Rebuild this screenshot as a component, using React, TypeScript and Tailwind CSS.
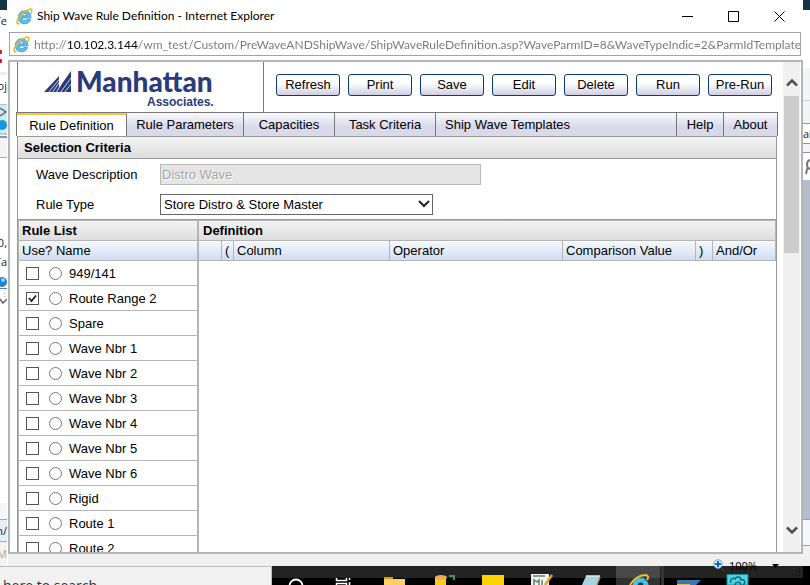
import React from "react";

const rules = [
  "949/141",
  "Route Range 2",
  "Spare",
  "Wave Nbr 1",
  "Wave Nbr 2",
  "Wave Nbr 3",
  "Wave Nbr 4",
  "Wave Nbr 5",
  "Wave Nbr 6",
  "Rigid",
  "Route 1",
  "Route 2",
];

const actions = ["Refresh", "Print", "Save", "Edit", "Delete", "Run", "Pre-Run"];

const tabs = [
  { name: "Rule Parameters", size: "w-[117px]" },
  { name: "Capacities", size: "w-[91px]" },
  { name: "Task Criteria", size: "w-[101px]" },
  { name: "Ship Wave Templates", size: "flex-1 text-left pl-[9px]" },
  { name: "Help", size: "w-[47px]" },
  { name: "About", size: "w-[53px]" },
];

function IeLogo({ className }: { className: string }) {
  return (
    <svg viewBox="0 0 18 18" className={className} aria-hidden="true">
      <path
        d="M15.800 10.700H6.200c.1 1.700 1.300 2.700 3 2.700 1.100 0 1.900-.4 2.300-1.100h3.900c-.8 2.800-3.100 4.400-6.100 4.400-4.100 0-6.900-2.700-6.900-6.700S5.200 2.900 9.200 2.900c4.200 0 6.800 2.900 6.600 7.800zM6.300 8.200h5.400c-.2-1.400-1.200-2.200-2.700-2.200S6.500 6.800 6.300 8.200z"
        fill="#5cc0ef"
        stroke="#1f82cb"
        strokeWidth=".7"
      />
      <path
        d="M3.200 16.600c-2.600.8-2.700-2.100-.8-5.300C5 6.600 10.500 2 14.300 1.300c2.500-.5 2.900 1.500 1.900 3.900"
        fill="none"
        stroke="#efb52a"
        strokeWidth="1.700"
        strokeLinecap="round"
      />
    </svg>
  );
}

function Chevron({ className, d }: { className: string; d: string }) {
  return (
    <svg viewBox="0 0 12 9" className={className} aria-hidden="true">
      <path d={d} fill="none" stroke="#505050" strokeWidth="2.500" />
    </svg>
  );
}

function LeftBackdrop() {
  return (
    <div className="flex w-[7px] shrink-0 flex-col overflow-hidden bg-white font-['Open_Sans',sans-serif] text-[11px] leading-[14px] text-[#222]">
      <div className="h-[10px] shrink-0 bg-[#143447]" />
      <div className="mt-1 flex h-[34px] shrink-0 justify-end">Te</div>
      <svg viewBox="0 0 7 16" className="h-4 w-[7px] shrink-0" aria-hidden="true">
        <circle cx="0" cy="4" r="2.200" fill="#d5152f" />
        <circle cx="0" cy="13" r="2.200" fill="#d5152f" />
      </svg>
      <div className="mt-2 h-[3px] shrink-0 bg-[#eceef5]" />
      <div className="mt-1 flex h-[25px] shrink-0 justify-end">oj</div>
      <svg viewBox="0 0 7 34" className="h-[34px] w-[7px] shrink-0" aria-hidden="true">
        <path d="M0 0h7v30H0z" fill="#cdeaf7" />
        <path d="M0 0h7M0 30h7" stroke="#7aa9c2" />
        <path d="M0 4l6 4-6 4" fill="none" stroke="#666" strokeWidth="1.500" />
        <circle cx="2" cy="21" r="5" fill="#1697e0" />
        <path d="M0 33h7" stroke="#8a97ab" strokeWidth="2" />
      </svg>
      <div className="h-5 shrink-0 border-b border-[#aaa] bg-[#f4f4f4]" />
      <div className="mt-[78px] flex h-[19px] shrink-0 justify-end">0,</div>
      <div className="flex h-[19px] shrink-0 justify-end">Ta</div>
      <svg viewBox="0 0 7 36" className="h-9 w-[7px] shrink-0" aria-hidden="true">
        <circle cx="2" cy="8" r="5" fill="#1d85cc" />
        <circle cx="3" cy="6" r="2" fill="#8fd3f5" />
        <path d="M0 14.500h7" stroke="#5a7ea8" />
        <path d="M4.500 16v8" stroke="#bbb" strokeDasharray="1 2" />
        <path d="M0 25l3 4 4-4" fill="none" stroke="#666" strokeWidth="1.500" />
      </svg>
      <div className="flex-1" />
      <div className="h-[17px] shrink-0 border-b border-[#9aa6bd] bg-[#f5f6f9]" />
      <div className="flex h-[22px] shrink-0 items-center justify-end border-b border-[#aab] bg-[#e8edf7]">n/</div>
      <div className="flex h-6 shrink-0 items-center justify-end bg-[#f3f3f3] text-[#b5a98f]">M</div>
    </div>
  );
}

function RightBackdrop() {
  return (
    <div className="flex w-[7px] shrink-0 flex-col overflow-hidden bg-white font-['Open_Sans',sans-serif] text-[11px] leading-[14px] text-[#222]">
      <div className="h-[10px] shrink-0 bg-[#143447]" />
      <div className="h-[58px] shrink-0" />
      <div className="h-[33px] shrink-0 border-b border-[#cdd3df] bg-[#f3f4f7]" />
      <div className="h-[23px] shrink-0 border-b border-[#8795ad] bg-[#f3f4f7]" />
      <div className="flex h-5 shrink-0 items-center border-b border-[#8795ad]">ab</div>
      <div className="h-[9px] shrink-0 border-b border-[#8795ad] bg-[#f3f4f7]" />
      <svg viewBox="0 0 7 27" className="h-[27px] w-[7px] shrink-0" aria-hidden="true">
        <path d="M7 7c-4 1-4 8 0 9M5 15c-2 1-1 4-2 6" fill="none" stroke="#777" strokeWidth="2" />
      </svg>
      <div className="flex-1 bg-[#b4bdcc]" />
      <div className="h-[27px] shrink-0 border-y border-[#9aa3b3] bg-[#f5f6f8]" />
      <div className="h-5 shrink-0 bg-[#f0f0f0]" />
    </div>
  );
}

function TitleBar() {
  return (
    <div className="flex h-8 shrink-0 items-center pr-px pl-[9px] font-['Lato',sans-serif] text-[12px] text-black">
      <IeLogo className="mr-1 size-[17px]" />
      <h1 className="flex-1 whitespace-nowrap">Ship Wave Rule Definition - Internet Explorer</h1>
      <div className="flex">
        <button aria-label="Minimize" className="grid w-[46px] place-items-center">
          <svg viewBox="0 0 11 11" className="size-[11px]">
            <path d="M0 5.500h11" stroke="#000" />
          </svg>
        </button>
        <button aria-label="Maximize" className="grid w-[46px] place-items-center">
          <svg viewBox="0 0 11 11" className="size-[11px]">
            <path d="M.5.500h10v10H.5z" fill="none" stroke="#000" />
          </svg>
        </button>
        <button aria-label="Close" className="grid w-[46px] place-items-center">
          <svg viewBox="0 0 11 11" className="size-[11px]">
            <path d="M.5.500l10 10M10.500.500l-10 10" stroke="#000" />
          </svg>
        </button>
      </div>
    </div>
  );
}

function AddressBar() {
  return (
    <div className="mr-[2px] ml-[2px] flex h-6 shrink-0 items-center gap-1 border border-[#a3a3a3] pl-[3px]">
      <IeLogo className="size-[17px] shrink-0" />
      <input
        aria-label="Address"
        readOnly
        className="h-5 min-w-0 flex-1 bg-[linear-gradient(90deg,#777_33px,#000_33px,#000_104px,#777_104px)] bg-clip-text font-['Lato',sans-serif] text-[12px] text-transparent outline-none"
        value="http://10.102.3.144/wm_test/Custom/PreWaveANDShipWave/ShipWaveRuleDefinition.asp?WaveParmID=8&WaveTypeIndic=2&ParmIdTemplate"
      />
    </div>
  );
}

function Header() {
  return (
    <div className="mr-px ml-px flex h-[50px] shrink-0">
      <div className="flex w-[247px] shrink-0 border-x border-[#7a7a7a] pl-[26px]">
        <svg viewBox="0 0 28 22" className="mt-[9px] h-[22px] w-7" aria-hidden="true">
          <path d="M0 21L15 5v16zM12 21L27 0v21z" fill="#2a3b7d" />
          <path d="M4 22L15.500 8M8 22L19 6M12 22L23 3M16 22L27 7M20 22L28 12" stroke="#fff" strokeWidth=".8" />
        </svg>
        <div className="ml-1 flex flex-col pt-[5px] text-[#2a3b7d]">
          <span className="font-['Lato',sans-serif] text-[28px] leading-[28px] font-black">Manhattan</span>
          <span className="pl-[71px] text-[12px] leading-[14px] font-bold">Associates.</span>
        </div>
      </div>
      <div className="flex flex-1 items-start gap-2 pt-3 pl-3">
        {actions.map((a) => (
          <button
            key={a}
            className="h-[22px] w-16 rounded-[3px] border border-[#0b3b70] bg-linear-to-b from-white from-40% to-[#cfcfe2] text-center leading-[18px]"
          >
            {a}
          </button>
        ))}
      </div>
    </div>
  );
}

function Tabs() {
  return (
    <nav className="flex h-6 shrink-0 border border-b-0 border-[#777]">
      <button className="w-[110px] border-t-2 border-r border-t-[#fdc441] border-r-[#777] bg-white">
        Rule Definition
      </button>
      {tabs.map((t) => (
        <button
          key={t.name}
          className={`${t.size} border-r border-[#777] bg-linear-to-b from-[#fafafe] to-[#d9d9ea] to-60% last:border-r-0`}
        >
          {t.name}
        </button>
      ))}
    </nav>
  );
}

function Criteria() {
  return (
    <section className="shrink-0">
      <h2 className="h-[23px] border-y border-[#999] bg-linear-to-b from-[#f3f3f3] to-[#dedede] pl-[6px] leading-[21px] font-bold">
        Selection Criteria
      </h2>
      <div className="flex h-[61px] flex-col gap-[9px] border-b border-[#999] pt-[5px] pl-[18px]">
        <div className="flex h-[21px] items-center">
          <label htmlFor="desc" className="w-[124px]">
            Wave Description
          </label>
          <input
            id="desc"
            disabled
            value="Distro Wave"
            className="h-[21px] w-[321px] border border-[#b9b9b9] bg-[#e5e5e5] pl-px text-[#a5a5a5] [text-shadow:1px_1px_0_#fff]"
          />
        </div>
        <div className="flex h-[21px] items-center">
          <label htmlFor="type" className="w-[124px]">
            Rule Type
          </label>
          <div className="relative">
            <select
              id="type"
              className="block h-[21px] w-[273px] appearance-none border border-[#666] bg-white pl-[3px]"
            >
              <option>Store Distro &amp; Store Master</option>
            </select>
            <svg
              viewBox="0 0 12 8"
              className="pointer-events-none absolute top-[6px] right-[3px] h-2 w-3"
              aria-hidden="true"
            >
              <path d="M1 1l5 5 5-5" fill="none" stroke="#222" strokeWidth="2" />
            </svg>
          </div>
        </div>
      </div>
    </section>
  );
}

function RuleList() {
  return (
    <section className="w-[180px] shrink-0 border-r-2 border-[#b5b5b5]">
      <h2 className="h-[21px] border-t border-b border-[#b5b5b5] bg-linear-to-b from-[#f3f3f3] to-[#dedede] pl-[3px] leading-[19px] font-bold">
        Rule List
      </h2>
      <table className="w-full table-fixed border-separate border-spacing-0">
        <colgroup>
          <col className="w-[30px]" />
          <col />
        </colgroup>
        <thead>
          <tr className="bg-linear-to-b from-[#f7fafd] to-[#cddcf3]">
            <th
              colSpan={2}
              className="h-5 border-b border-[#b5b5b5] p-0 pl-[3px] text-left leading-[19px] font-normal"
            >
              Use? Name
            </th>
          </tr>
        </thead>
        <tbody>
          {rules.map((rule, i) => (
            <tr key={rule} className="*:h-[25px] *:border-b *:border-[#b5b5b5]">
              <td className="p-0 pl-[7px]">
                <div className="relative size-[13px]">
                  <input
                    type="checkbox"
                    aria-label={`Use ${rule}`}
                    defaultChecked={i === 1}
                    className="peer block size-[13px] appearance-none border border-[#555] bg-white"
                  />
                  <svg
                    viewBox="0 0 13 13"
                    className="pointer-events-none absolute inset-0 hidden size-[13px] peer-checked:block"
                    aria-hidden="true"
                  >
                    <path d="M3 6l2.500 3L10 3.500" fill="none" stroke="#222" strokeWidth="1.800" />
                  </svg>
                </div>
              </td>
              <td className="p-0">
                <div className="flex items-center gap-[7px]">
                  <input
                    type="radio"
                    name="rule"
                    id={`rule-${i}`}
                    className="size-[13px] appearance-none rounded-full border border-[#777] bg-white"
                  />
                  <label htmlFor={`rule-${i}`} className="pt-0.5 leading-5">
                    {rule}
                  </label>
                </div>
              </td>
            </tr>
          ))}
        </tbody>
      </table>
    </section>
  );
}

function Definition() {
  return (
    <section className="min-w-0 flex-1">
      <h2 className="h-[21px] border-y border-r border-[#b5b5b5] bg-linear-to-b from-[#f3f3f3] to-[#dedede] pl-1 leading-[19px] font-bold">
        Definition
      </h2>
      <table className="w-full table-fixed border-separate border-spacing-0 text-left leading-[19px]">
        <thead>
          <tr className="bg-linear-to-b from-[#f7fafd] to-[#cddcf3] *:h-5 *:border-r *:border-b *:border-[#b5b5b5] *:p-0 *:pl-[3px] *:font-normal">
            <th className="w-[23px]" />
            <th className="w-3">(</th>
            <th className="w-[156px]">Column</th>
            <th className="w-[173px]">Operator</th>
            <th>Comparison Value</th>
            <th className="w-[17px]">)</th>
            <th className="w-[63px]">And/Or</th>
          </tr>
        </thead>
      </table>
    </section>
  );
}

function ScrollBar() {
  return (
    <div className="mr-px flex w-[17px] shrink-0 flex-col items-center bg-[#f0f0f0]">
      <Chevron className="mt-4 mb-[9px] h-[9px] w-3 shrink-0" d="M1 7.500l5-5 5 5" />
      <div className="h-[32%] w-[15px] bg-[#cdcdcd]" />
      <div className="flex-1" />
      <Chevron className="mb-[17px] h-[9px] w-3 shrink-0" d="M1 1.500l5 5 5-5" />
    </div>
  );
}

function StatusBar() {
  return (
    <div className="relative z-10 ml-px flex h-3 shrink-0 items-start justify-end bg-[#f0f0f0] pr-6 font-['Open_Sans',sans-serif] text-[11px] text-black">
      <svg viewBox="0 0 12 13" className="mt-[5px] h-[13px] w-3" aria-hidden="true">
        <path d="M8 8l3 4" stroke="#333" strokeWidth="2.500" />
        <circle cx="5" cy="5" r="4.300" fill="#d9edfa" stroke="#8ba6bd" />
        <path d="M2 5h6M5 2v6" stroke="#0f66c4" strokeWidth="2" />
      </svg>
      <span className="mt-1 ml-1 leading-[16px]">100%</span>
      <svg viewBox="0 0 7 4" className="mt-[10px] ml-[15px] h-1 w-[7px]" aria-hidden="true">
        <path d="M0 0h7L3.500 4z" fill="#000" />
      </svg>
    </div>
  );
}

function TaskBar() {
  return (
    <div className="flex h-[19px] shrink-0 overflow-hidden">
      <div className="w-[272px] shrink-0 border-t border-r border-[#bdbdbd] bg-[#f1f1f1] pt-[10px] pl-[3px] font-['Open_Sans',sans-serif] text-[14px] leading-[18px] text-[#333]">
        here to search
      </div>
      <div className="min-w-0 flex-1 bg-black">
        <svg viewBox="0 0 538 19" className="h-[19px] w-[538px]" aria-hidden="true">
          <path d="M0 0h531v12H0z" fill="#232323" />
          <circle cx="24" cy="20" r="6.500" fill="none" stroke="#fff" strokeWidth="1.800" />
          <path d="M64.500 12v2.500h10V12M77.500 12v2M64.500 19v-1.500h10V19M77.500 16v3" fill="none" stroke="#fff" strokeWidth="1.500" />
          <path d="M112 11h9v2h12v6h-21z" fill="#f8cf69" />
          <path d="M112 11h9v2h-9z" fill="#dd9412" />
          <path d="M163 11h11v8h-11z" fill="#f7cd18" />
          <ellipse cx="169" cy="11.500" rx="6" ry="2.500" fill="#efab5c" />
          <path d="M177 10h5v4" fill="none" stroke="#3b9a4d" strokeWidth="2" />
          <path d="M210 9h22v10h-22z" fill="#fbd400" />
          <path d="M259 8h18v11h-18z" fill="#f0f2ee" />
          <path d="M261 10h12M262 19v-5l3 2 2-2v5M270 14v5" fill="none" stroke="#68806e" strokeWidth="1.500" />
          <path d="M280 9l-7 10" stroke="#e5a029" strokeWidth="2.500" />
          <path d="M314 10h14l-3 9h-15z" fill="#a4d5e2" />
          <path d="M314 10h14" stroke="#e8e8e8" strokeWidth="1.500" />
          <path d="M328 11l-3 8" stroke="#a88e5a" strokeWidth="1.500" />
          <path d="M344 0h44v19h-44z" fill="#484848" />
          <path d="M344 12h44v7h-44z" fill="#303030" />
          <path d="M389 0h3v19h-3z" fill="#353535" />
          <path d="M361 19c1-9 14-9 15 0h-4c-1-4-6-4-7 0z" fill="#43c2f1" stroke="#43c2f1" />
          <path d="M358 19c3-6 10-10 15-10 3 0 4 2 2 5" fill="none" stroke="#f6bd22" strokeWidth="2" />
          <path d="M405 14h24l-5 5h-19z" fill="#3977ae" />
          <path d="M405 18h13v1h-13z" fill="#f6b51a" />
          <path d="M455 8.500h21V19h-21z" fill="#4bd4e3" stroke="#178d9e" />
          <path d="M459 17c-2-4 3-6 4-4 2-4 7-1 6 1 4-1 5 3 2 5M463 19c0-3 5-4 6 0" fill="none" stroke="#166677" strokeWidth="1.500" />
          <path d="M527 3h1M524 6h1M527 6h1M521 9h1M524 9h1M527 9h1" stroke="#111" strokeWidth="1.500" />
        </svg>
      </div>
    </div>
  );
}

export default function App() {
  return (
    <div className="flex h-screen flex-col overflow-hidden bg-white font-['Liberation_Sans',Arial,sans-serif] text-[13px] text-black">
      <div className="flex min-h-0 flex-1">
        <LeftBackdrop />
        <main className="flex min-w-0 flex-1 flex-col bg-white">
          <TitleBar />
          <AddressBar />
          <div className="mt-1 ml-px flex min-h-0 flex-1 border-2 border-[#b5b5b5]">
            <div className="flex min-w-0 flex-1 flex-col overflow-hidden pr-[5px] pl-[6px]">
              <Header />
              <Tabs />
              <div className="mx-px flex min-h-0 flex-1 flex-col border-x border-[#999]">
                <Criteria />
                <div className="flex min-h-0 flex-1 border-l border-[#b5b5b5]">
                  <RuleList />
                  <Definition />
                </div>
              </div>
            </div>
            <ScrollBar />
          </div>
          <StatusBar />
        </main>
        <RightBackdrop />
      </div>
      <TaskBar />
    </div>
  );
}
